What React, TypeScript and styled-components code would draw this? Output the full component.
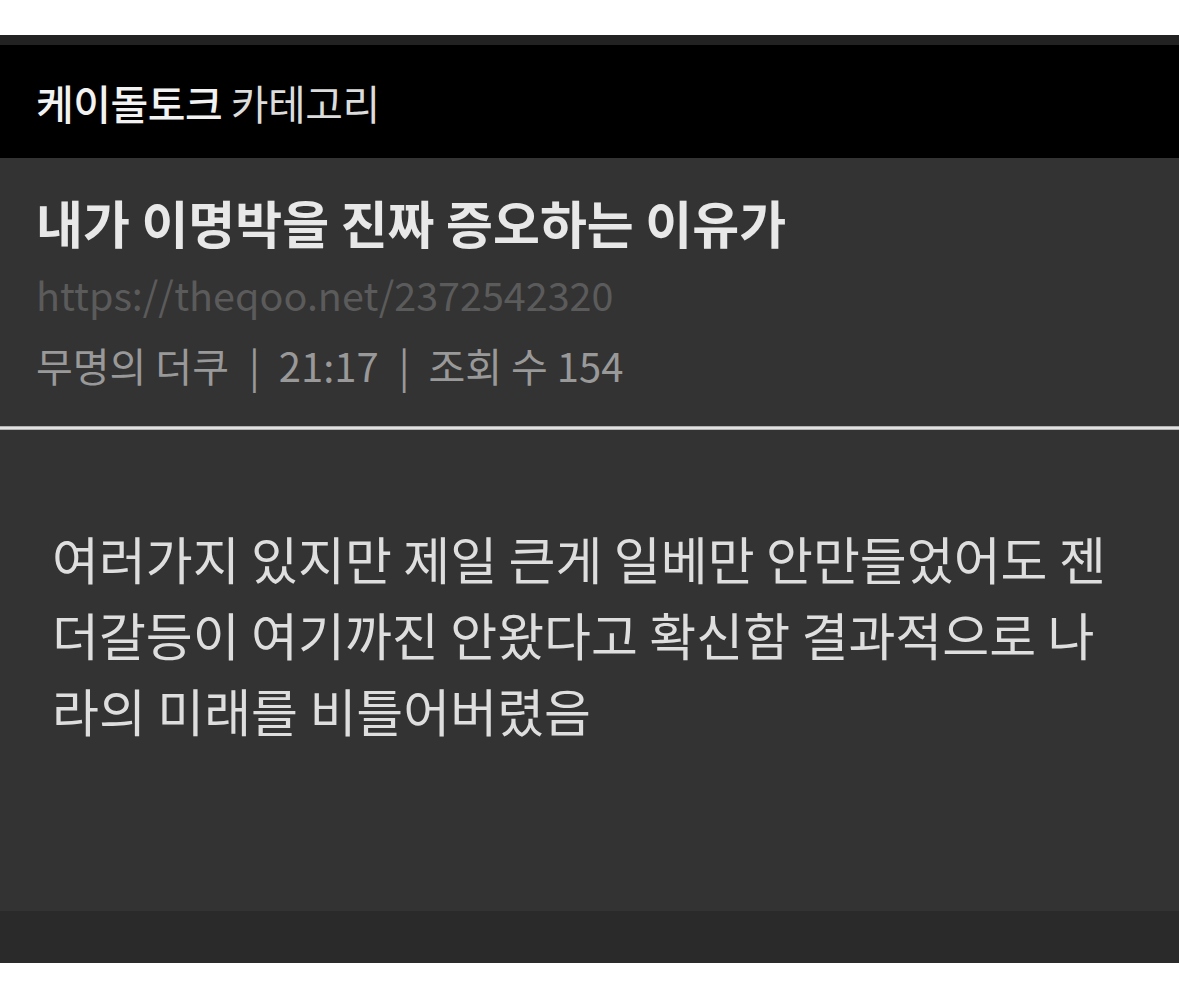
import * as React from 'react'
import styled, { createGlobalStyle } from 'styled-components'

const GlobalStyle = createGlobalStyle`
  html, body {
    margin: 0;
    padding: 0;
    background: #ffffff;
  }
  body {
    font-family: 'Noto Sans CJK KR', 'Noto Sans', sans-serif;
  }
`

const Screen = styled.div`
  margin-top: 35px;
  width: 1179px;
  display: flex;
  flex-direction: column;
`

const CategoryBar = styled.header`
  height: 113px;
  border-top: 10px solid #222222;
  background: #000000;
  display: flex;
  align-items: center;
  padding: 0 36px;
  color: #f2f2f2;
  font-size: 41px;
  letter-spacing: -0.5px;
`

const Strong = styled.span`
  font-weight: 500;
`

const Light = styled.span`
  font-weight: 400;
  color: #dcdcdc;
`

const PostInfo = styled.section`
  background: #333333;
  height: 268px;
  padding: 34px 36px 0 36px;
  display: flex;
  flex-direction: column;
  box-sizing: border-box;
`

const Title = styled.h1`
  margin: 0;
  font-size: 51px;
  font-weight: 700;
  color: #e8e8e8;
  line-height: 60px;
`

const Url = styled.div`
  font-size: 39.5px;
  color: #5b5b5b;
  line-height: 84px;
`

const Meta = styled.div`
  font-size: 40px;
  color: #999999;
  line-height: 58px;
`

const Pipe = styled.span`
  margin: 0 19px 0 20px;
`

const Divider = styled.hr`
  margin: 0;
  border: none;
  height: 4px;
  background: linear-gradient(#9a9a9a, #e6e6e6 40%, #e6e6e6 60%, #9a9a9a);
`

const Body = styled.article`
  background: #333333;
  height: 481px;
  box-sizing: border-box;
  padding: 90px 52px 0 52px;
  font-size: 51px;
  line-height: 76px;
  color: #dedede;
`

const BottomBar = styled.div`
  height: 52px;
  background: #2a2a2a;
`

export default function App() {
  return (
    <>
      <GlobalStyle />
      <Screen>
        <CategoryBar>
          <Strong>케이돌토크</Strong>&nbsp;<Light>카테고리</Light>
        </CategoryBar>
        <PostInfo>
          <Title>내가 이명박을 진짜 증오하는 이유가</Title>
          <Url>https://theqoo.net/2372542320</Url>
          <Meta>
            무명의 더쿠<Pipe>|</Pipe>21:17<Pipe>|</Pipe>조회 수 154
          </Meta>
        </PostInfo>
        <Divider />
        <Body>
          여러가지 있지만 제일 큰게 일베만 안만들었어도 젠<br />
          더갈등이 여기까진 안왔다고 확신함 결과적으로 나<br />
          라의 미래를 비틀어버렸음
        </Body>
        <BottomBar />
      </Screen>
    </>
  )
}
